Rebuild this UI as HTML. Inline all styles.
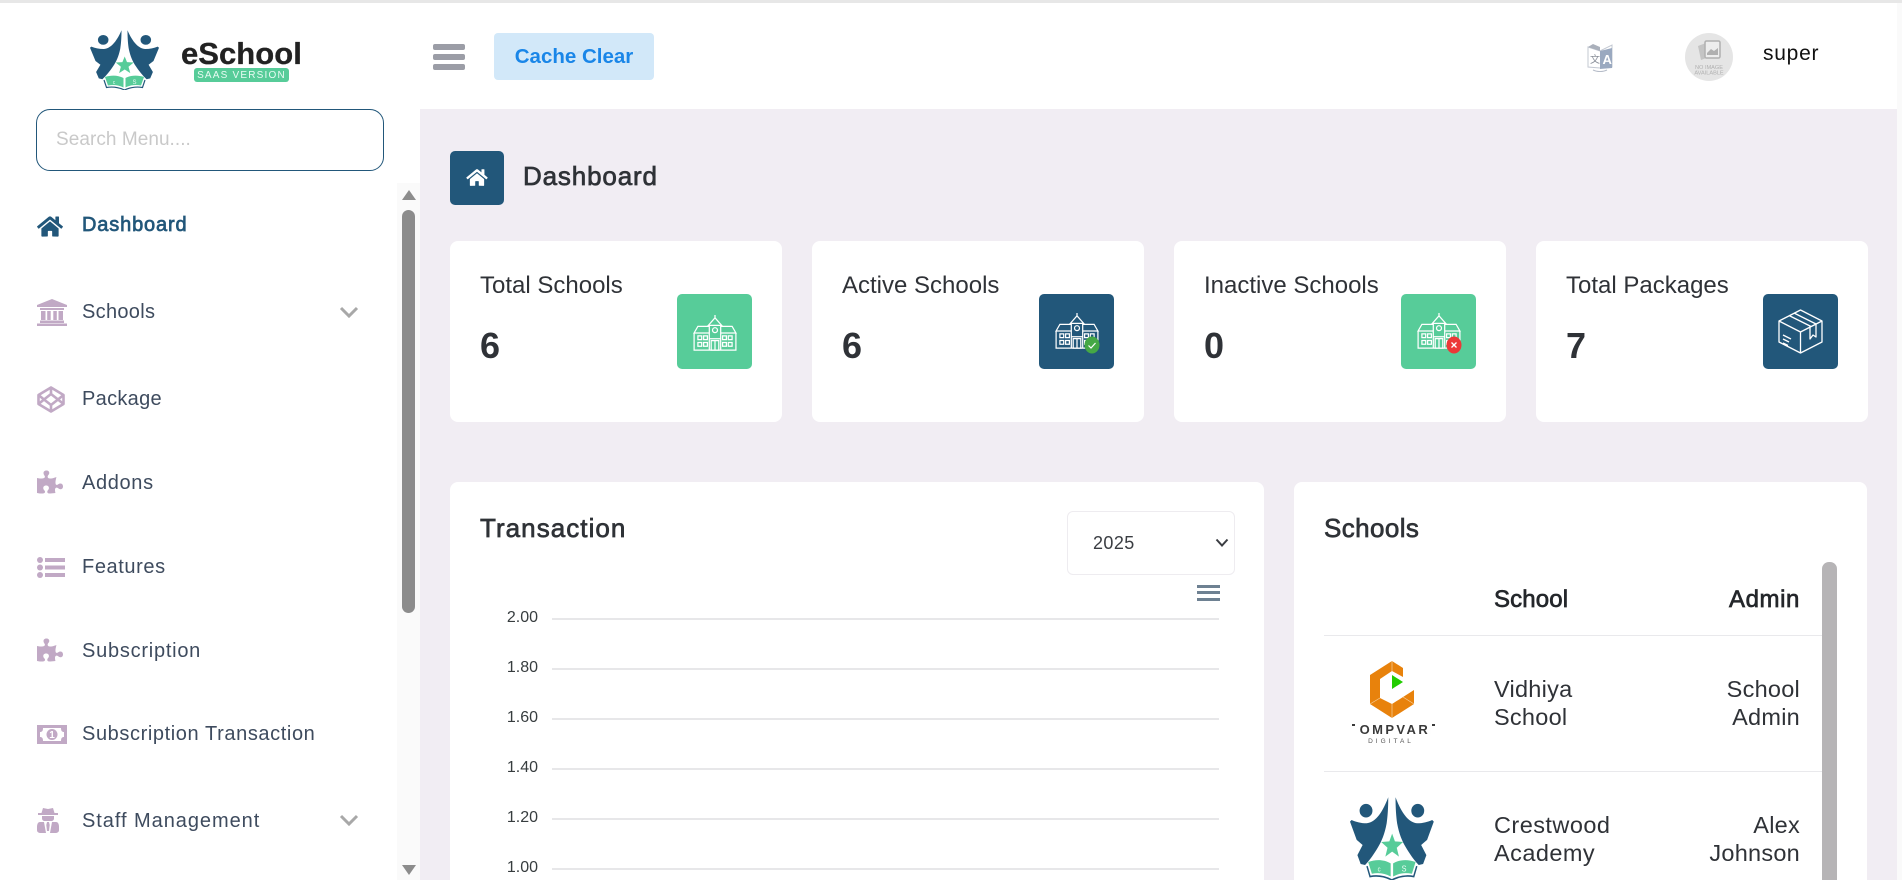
<!DOCTYPE html>
<html lang="en"><head><meta charset="utf-8"><title>eSchool Dashboard</title>
<style>
html,body{margin:0;padding:0;width:1902px;height:880px;overflow:hidden;background:#fff}
body{position:relative;font-family:"Liberation Sans",sans-serif;color:#2f3237}
.a,.t,svg.a{position:absolute}
.t{white-space:nowrap;line-height:30px;height:30px}
.m{-webkit-text-stroke:.7px currentColor}
.nav{left:82px;font-size:20px;color:#3e4b5e}
.card{position:absolute;background:#fff;border-radius:8px}
.ib{position:absolute;top:294px;width:75px;height:75px;border-radius:5px}
.g{background:#57cc99}.n{background:#22577a}
.lab{font-size:24px;top:271px}
.val{font-size:36px;top:331px;height:30px;line-height:30px;font-weight:700}
.gl{position:absolute;left:552px;width:667px;height:2px;background:#e7e7e9}
.yl{position:absolute;left:490px;width:48px;text-align:right;font-size:16px;line-height:18px;color:#373d3f}
.td{font-size:23.5px;line-height:28px;color:#2f3237;position:absolute;letter-spacing:.25px}
</style></head><body>
<div class="a" style="left:0;top:0;width:1902px;height:3px;background:#e7e7e7"></div>
<div class="a" style="left:1897px;top:3px;width:5px;height:877px;background:#fafafa"></div>
<div class="a" style="left:420px;top:109px;width:1477px;height:771px;background:#f1edf3"></div>

<svg width="0" height="0" style="position:absolute"><defs>
<symbol id="logo" viewBox="0 0 70 60" preserveAspectRatio="none">
<g fill="#22577a"><ellipse cx="13.200" cy="9.900" rx="5.300" ry="4.900"/><ellipse cx="55.800" cy="9.900" rx="5.300" ry="4.900"/>
<path d="M31.500 .2C31.500 8 31 14 30.200 19 28.500 27 26 32 23.300 36 20 41 16 46 12.400 49.200L8.800 48.400 6.100 42 10.400 34.700 5.500 31 0 17.800 1.300 16.600C5 18 9 19 13.700 19 20 18.500 26 13 31.500 .2Z"/>
<path transform="translate(69 0) scale(-1 1)" d="M31.500 .2C31.500 8 31 14 30.200 19 28.500 27 26 32 23.300 36 20 41 16 46 12.400 49.200L8.800 48.400 6.100 42 10.400 34.700 5.500 31 0 17.800 1.300 16.600C5 18 9 19 13.700 19 20 18.500 26 13 31.500 .2Z"/></g>
<path fill="#57cc99" d="M34.700 26.500l2.300 5.600 6.700.4-5.200 4.200 1.800 6.400-5.600-3.600-5.600 3.600 1.800-6.400-5.200-4.200 6.700-.4z"/>
<path fill="#57cc99" d="M15 47c6-2 13-2 18.500 1v9.500c-5-2.500-10-3-15.500-2zM35.500 48c5.500-3 12.500-3 18.500-1l-3 8.500c-5.500-1-10.500-.5-15.500 2z"/>
<path fill="none" stroke="#22577a" stroke-width="1.200" d="M14 50l2.500 7.500c6-1 12.500 0 18 2.500 5.500-2.500 12-3.500 18-2.500l2.500-7.500"/>
<text x="24" y="54" font-size="5" fill="#e9fbf3" text-anchor="middle" font-family="Liberation Sans,sans-serif">c</text>
<text x="44.500" y="54" font-size="6" fill="#e9fbf3" text-anchor="middle" font-family="Liberation Sans,sans-serif">S</text>
</symbol>
<symbol id="bld" viewBox="0 0 48 40">
<g fill="none" stroke="#fff" stroke-width="1.300">
<path d="M17 12L24 4l7 8zM18 12v26M30 12v26M24 1v3"/>
<circle cx="24" cy="17" r="2.600"/>
<path d="M18 13H6L2 20h16M30 13h12l4 7H30M2 20v18h44V20"/>
<path d="M18 26h12M20 28h8v10h-8zM24 28v10"/>
<path d="M6 23h4v4H6zM12 23h4v4h-4zM6 30h4v4H6zM12 30h4v4h-4zM32 23h4v4h-4zM38 23h4v4h-4zM32 30h4v4h-4zM38 30h4v4h-4z"/>
</g></symbol>
<clipPath id="cv"><rect x="8" y="55" width="73" height="25"/></clipPath>
</defs></svg>

<!-- Logo -->
<svg class="a" style="left:90px;top:30px" width="70" height="60" viewBox="0 0 70 60"><use href="#logo" width="70" height="60"/></svg>
<div class="t" style="left:181px;top:39px;font-size:31px;font-weight:700;color:#222;letter-spacing:.05px;-webkit-text-stroke:.3px #222">eSchool</div>
<div class="a" style="left:194px;top:68px;width:95px;height:14px;border-radius:3px;background:#57cc99;color:#e9fbf3;font-size:10px;line-height:15px;text-align:center;letter-spacing:1.200px">SAAS VERSION</div>

<!-- Top bar -->
<div class="a" style="left:433px;top:44px;width:32px;height:6px;background:#9b9da6;border-radius:2px"></div>
<div class="a" style="left:433px;top:54px;width:32px;height:6px;background:#9b9da6;border-radius:2px"></div>
<div class="a" style="left:433px;top:64px;width:32px;height:6px;background:#9b9da6;border-radius:2px"></div>
<div class="a" style="left:494px;top:33px;width:160px;height:47px;background:#d2e8f9;border-radius:4px;text-align:center;line-height:48px;font-size:20.5px;font-weight:700;color:#1a86e8">Cache Clear</div>

<svg class="a" style="left:1585px;top:41px" width="30" height="32" viewBox="0 0 30 32">
<path d="M3 6l12 4 12-6v22l-12 1-12-1z" fill="#fff" stroke="#c3c8d2"/>
<path d="M15 10l12-3v20l-12 1z" fill="#9aa9c0"/>
<path d="M3 6l12 4V6L8 3z" fill="#aab0bb"/>
<text x="17.500" y="23" font-size="13" font-weight="700" fill="#fff" font-family="Liberation Sans,sans-serif">A</text>
<text x="5" y="22" font-size="10" fill="#8a8f99" font-family="Liberation Sans,Noto Sans CJK SC,sans-serif">文</text>
<path d="M8 29c4 2 10 2 14 0" fill="none" stroke="#b5bcc8"/></svg>

<div class="a" style="left:1685px;top:33px;width:48px;height:48px;border-radius:50%;background:#e5e5e5"></div>
<svg class="a" style="left:1685px;top:33px" width="48" height="48" viewBox="0 0 48 48">
<path d="M13 13l8-3 3 14-8 3z" fill="#c4c4c4"/>
<rect x="20" y="8" width="15" height="17" rx="1.500" fill="#ededed" stroke="#b0b0b0" stroke-width="1.500"/>
<path d="M22 20l4-4 3 2 4-3v7H22z" fill="#b0b0b0"/>
<text x="24" y="36" font-size="5.600" text-anchor="middle" fill="#b0b0b0" font-family="Liberation Sans,sans-serif">NO IMAGE</text>
<text x="24" y="41.500" font-size="5.600" text-anchor="middle" fill="#b0b0b0" font-family="Liberation Sans,sans-serif">AVAILABLE</text></svg>
<div class="t" style="left:1763px;top:39px;font-size:21px;color:#111;letter-spacing:.75px">super</div>

<!-- Search -->
<div class="a" style="left:36px;top:109px;width:346px;height:60px;border:1px solid #22577a;border-radius:14px;background:#fff"></div>
<div class="t" style="left:56px;top:125px;font-size:19px;color:#c9c9c9;letter-spacing:.05px">Search Menu....</div>

<!-- Sidebar scrollbar -->
<div class="a" style="left:397px;top:183px;width:23px;height:697px;background:#fafafa"></div>
<div class="a" style="left:402px;top:210px;width:13px;height:403px;background:#8c8c8c;border-radius:7px"></div>
<svg class="a" style="left:401px;top:189px" width="16" height="12"><path d="M8 1l7 10H1z" fill="#8c8c8c"/></svg>
<svg class="a" style="left:401px;top:864px" width="16" height="12"><path d="M1 1h14L8 11z" fill="#8c8c8c"/></svg>

<!-- Sidebar nav -->
<svg class="a" style="left:37px;top:215px" width="26" height="23" viewBox="0 0 576 512"><path fill="#22577a" d="M280.370 148.260L96 300.110V464a16 16 0 0 0 16 16l112.060-.29a16 16 0 0 0 15.920-16V368a16 16 0 0 1 16-16h64a16 16 0 0 1 16 16v95.640a16 16 0 0 0 16 16.050L464 480a16 16 0 0 0 16-16V300L295.670 148.260a12.190 12.190 0 0 0-15.300 0zM571.600 251.470L488 182.560V44.050a12 12 0 0 0-12-12h-56a12 12 0 0 0-12 12v72.610L318.470 43a48 48 0 0 0-61 0L4.340 251.470a12 12 0 0 0-1.600 16.900l25.500 31A12 12 0 0 0 45.150 301l235.220-193.740a12.190 12.190 0 0 1 15.300 0L530.900 301a12 12 0 0 0 16.900-1.600l25.500-31a12 12 0 0 0-1.700-16.930z"/></svg>
<div class="t nav m" style="top:210px;color:#22577a;letter-spacing:.85px">Dashboard</div>

<svg class="a" style="left:37px;top:299px" width="30" height="27" viewBox="0 0 30 27"><path fill="#c1a9c5" d="M15 0l15 6v2H0V6zM3 9h24v2H3zM4 12h4.500v9H4zM10.200 12h3.500v9h-3.500zM16.300 12h3.500v9h-3.500zM21.500 12h4.500v9h-4.500zM3 21.500h24v2.500H3zM0 24.500h30V27H0z"/></svg>
<div class="t nav" style="top:297px;letter-spacing:.3px">Schools</div>
<svg class="a" style="left:339px;top:306px" width="20" height="12"><path d="M2 2l8 8 8-8" fill="none" stroke="#a8a8a8" stroke-width="3"/></svg>

<svg class="a" style="left:37px;top:386px" width="28" height="27" viewBox="0 0 28 27"><g fill="none" stroke="#c1a9c5" stroke-width="2.600" stroke-linejoin="round"><path d="M14 1.500L26.500 9v9L14 25.500 1.500 18V9z"/><path d="M14 8l7 5.500-7 5.500-7-5.500zM14 1.500V8M14 19v6.500M1.500 9L7 13.500 1.500 18M26.500 9L21 13.500l5.500 4.500"/></g></svg>
<div class="t nav" style="top:384px;letter-spacing:.3px">Package</div>

<svg class="a" style="left:37px;top:470px" width="26" height="24" viewBox="0 0 576 512"><path id="pz" fill="#c1a9c5" d="M519.442 288.651c-41.519 0-59.5 31.593-82.058 31.593C377.409 320.244 432 144 432 144s-196.288 80-196.288-3.297c0-35.827 36.288-46.25 36.288-85.985C272 19.216 243.885 0 210.539 0c-34.654 0-66.366 18.891-66.366 56.346 0 41.364 31.711 59.277 31.711 81.75C175.885 207.719 0 166.758 0 166.758v333.237s178.635 41.047 178.635-28.662c0-22.473-40-40.107-40-81.471 0-37.456 29.25-56.346 63.577-56.346 33.673 0 61.788 19.216 61.788 54.717 0 39.735-36.288 50.158-36.288 85.985 0 60.803 129.675 25.73 181.23 25.73 0 0-34.725-120.101 25.827-120.101 35.962 0 46.423 36.152 86.308 36.152C556.712 416 576 387.99 576 354.443c0-34.199-18.962-65.792-56.558-65.792z"/></svg>
<div class="t nav" style="top:468px;letter-spacing:.65px">Addons</div>

<svg class="a" style="left:37px;top:557px" width="28" height="21" viewBox="0 0 28 21"><g fill="#c1a9c5"><circle cx="3" cy="3" r="3"/><circle cx="3" cy="10.500" r="3"/><circle cx="3" cy="18" r="3"/><rect x="8" y="1" width="20" height="4"/><rect x="8" y="8.500" width="20" height="4"/><rect x="8" y="16" width="20" height="4"/></g></svg>
<div class="t nav" style="top:552px;letter-spacing:.6px">Features</div>

<svg class="a" style="left:37px;top:638px" width="26" height="24" viewBox="0 0 576 512"><use href="#pz"/></svg>
<div class="t nav" style="top:636px;letter-spacing:.75px">Subscription</div>

<svg class="a" style="left:37px;top:725px" width="30" height="19" viewBox="0 0 30 19"><path fill="#c1a9c5" fill-rule="evenodd" d="M0 0h30v19H0zM6 3C6 6 5 7 3 7v5c2 0 3 1 3 4h18c0-3 1-4 3-4V7c-2 0-3-1-3-4z"/><circle cx="15" cy="9.500" r="5.500" fill="#c1a9c5"/><text x="15" y="13" font-size="10" font-weight="700" text-anchor="middle" fill="#fff" font-family="Liberation Sans,sans-serif">1</text></svg>
<div class="t nav" style="top:719px;letter-spacing:.6px">Subscription Transaction</div>

<svg class="a" style="left:37px;top:808px" width="22" height="25" viewBox="0 0 22 25"><path fill="#c1a9c5" d="M6 0l5 1 5-1 1.500 5H21v2H1V5h3.500zM5 8h12v2c0 2-1 3-3 3h-6c-2 0-3-1-3-3zM3 14h4l2 11H4c-2.500 0-4-1-4-3v-3c0-3 1-5 3-5zM15 14h4c2 0 3 2 3 5v3c0 2-1.500 3-4 3h-5z"/><path fill="#c1a9c5" d="M10 14h2l.7 3-.7 6h-2l-.7-6z"/></svg>
<div class="t nav" style="top:806px;letter-spacing:.95px">Staff Management</div>
<svg class="a" style="left:339px;top:814px" width="20" height="12"><path d="M2 2l8 8 8-8" fill="none" stroke="#a8a8a8" stroke-width="3"/></svg>

<!-- Page title -->
<div class="a n" style="left:450px;top:151px;width:54px;height:54px;border-radius:5px"></div>
<svg class="a" style="left:466px;top:168px" width="22" height="19" viewBox="0 0 576 512"><path fill="#fff" d="M280.370 148.260L96 300.110V464a16 16 0 0 0 16 16l112.060-.29a16 16 0 0 0 15.920-16V368a16 16 0 0 1 16-16h64a16 16 0 0 1 16 16v95.640a16 16 0 0 0 16 16.050L464 480a16 16 0 0 0 16-16V300L295.670 148.260a12.190 12.190 0 0 0-15.300 0zM571.600 251.470L488 182.560V44.050a12 12 0 0 0-12-12h-56a12 12 0 0 0-12 12v72.610L318.470 43a48 48 0 0 0-61 0L4.340 251.470a12 12 0 0 0-1.600 16.900l25.500 31A12 12 0 0 0 45.150 301l235.220-193.740a12.190 12.190 0 0 1 15.300 0L530.900 301a12 12 0 0 0 16.900-1.600l25.500-31a12 12 0 0 0-1.700-16.930z"/></svg>
<div class="t m" style="left:523px;top:161px;font-size:26px;color:#2f3237;letter-spacing:.85px">Dashboard</div>

<!-- Stat cards -->
<div class="card" style="left:450px;top:241px;width:332px;height:181px"></div>
<div class="card" style="left:812px;top:241px;width:332px;height:181px"></div>
<div class="card" style="left:1174px;top:241px;width:332px;height:181px"></div>
<div class="card" style="left:1536px;top:241px;width:332px;height:181px"></div>

<div class="t lab" style="left:480px">Total Schools</div>
<div class="t val" style="left:480px">6</div>
<div class="ib g" style="left:677px"></div>
<svg class="a" style="left:692px;top:314px" width="46" height="38"><use href="#bld"/></svg>

<div class="t lab" style="left:842px">Active Schools</div>
<div class="t val" style="left:842px">6</div>
<div class="ib n" style="left:1039px"></div>
<svg class="a" style="left:1054px;top:312px" width="46" height="38"><use href="#bld"/></svg>
<svg class="a" style="left:1084px;top:336px" width="16" height="18" viewBox="0 0 16 18"><ellipse cx="8" cy="9" rx="7.500" ry="8.500" fill="#45a845"/><path d="M4.500 9.500l2.500 2.500 4.500-5" fill="none" stroke="#fff" stroke-width="1.200"/></svg>

<div class="t lab" style="left:1204px">Inactive Schools</div>
<div class="t val" style="left:1204px">0</div>
<div class="ib g" style="left:1401px"></div>
<svg class="a" style="left:1416px;top:312px" width="46" height="38"><use href="#bld"/></svg>
<svg class="a" style="left:1446px;top:336px" width="16" height="18" viewBox="0 0 16 18"><ellipse cx="8" cy="9" rx="7.500" ry="8.500" fill="#ec3838"/><path d="M5.500 6.500l5 5M10.500 6.500l-5 5" stroke="#fff" stroke-width="1.300"/></svg>

<div class="t lab" style="left:1566px">Total Packages</div>
<div class="t val" style="left:1566px">7</div>
<div class="ib n" style="left:1763px"></div>
<svg class="a" style="left:1778px;top:309px" width="45" height="45" viewBox="0 0 45 45"><g fill="none" stroke="#fff" stroke-width="1.300" stroke-linejoin="round"><path d="M22.500 1L44 12v21L22.500 44 1 33V12zM1 12l21.500 11L44 12M22.500 23v21"/><path d="M11 6.500L33 17.500M16 4l22 11v13l-3-2-3 4v-13"/><path d="M5 30l6 3M5 26l8 4M5 34l5 2.500"/></g></svg>

<!-- Transaction card -->
<div class="card" style="left:450px;top:482px;width:814px;height:398px;border-radius:8px 8px 0 0"></div>
<div class="t m" style="left:480px;top:513px;font-size:26px;color:#2f3237;letter-spacing:1.050px">Transaction</div>
<div class="a" style="left:1067px;top:511px;width:166px;height:62px;border:1px solid #eeecf0;border-radius:6px"></div>
<div class="t" style="left:1093px;top:528px;font-size:18px;color:#3a3d42;letter-spacing:.4px">2025</div>
<svg class="a" style="left:1215px;top:538px" width="14" height="10"><path d="M1.500 1.500L7 7.500l5.500-6" fill="none" stroke="#3a3d42" stroke-width="2"/></svg>
<div class="a" style="left:1197px;top:585px;width:23px;height:3px;background:#6e8192"></div>
<div class="a" style="left:1197px;top:591px;width:23px;height:3px;background:#6e8192"></div>
<div class="a" style="left:1197px;top:598px;width:23px;height:3px;background:#6e8192"></div>

<div class="gl" style="top:618px"></div><div class="yl" style="top:609px">2.00</div>
<div class="gl" style="top:668px"></div><div class="yl" style="top:659px">1.80</div>
<div class="gl" style="top:718px"></div><div class="yl" style="top:709px">1.60</div>
<div class="gl" style="top:768px"></div><div class="yl" style="top:759px">1.40</div>
<div class="gl" style="top:818px"></div><div class="yl" style="top:809px">1.20</div>
<div class="gl" style="top:868px"></div><div class="yl" style="top:859px">1.00</div>

<!-- Schools card -->
<div class="card" style="left:1294px;top:482px;width:573px;height:398px;border-radius:8px 8px 0 0"></div>
<div class="t m" style="left:1324px;top:513px;font-size:26px;color:#2f3237;letter-spacing:.4px">Schools</div>
<div class="a" style="left:1822px;top:562px;width:15px;height:318px;background:#b6b4b6;border-radius:7px 7px 0 0"></div>
<div class="t m" style="left:1494px;top:585px;font-size:24px;color:#24272b;letter-spacing:.15px">School</div>
<div class="t m" style="right:102px;top:585px;font-size:24px;color:#24272b;letter-spacing:.6px">Admin</div>
<div class="a" style="left:1324px;top:635px;width:498px;height:1px;background:#e9e9ec"></div>
<div class="a" style="left:1324px;top:771px;width:498px;height:1px;background:#e9e9ec"></div>

<svg class="a" style="left:1350px;top:661px" width="86" height="84" viewBox="0 0 86 84">
<g transform="translate(20 0)">
<path fill="#e8820c" d="M22 0L33 7V16L22 10 10 18V37L22 43 44 29V43L22 57 0 43V14Z"/>
<path fill="#22cc00" d="M22 14L33 21 22 28Z"/>
<path fill="none" stroke="#f6cf9e" stroke-width=".7" d="M22 0V10M0 43L10 37M22 57V43M44 43L33 36"/>
</g>
<rect x="2" y="63" width="3" height="2" fill="#3a3a3a"/><rect x="82" y="63" width="3" height="2" fill="#3a3a3a"/>
<text x="44.500" y="73" font-size="13" font-weight="700" text-anchor="middle" letter-spacing="2.400" fill="#3a3a3a" clip-path="url(#cv)" font-family="Liberation Sans,sans-serif">COMPVARE</text>
<text x="41" y="82" font-size="6.500" text-anchor="middle" letter-spacing="3" fill="#555" font-family="Liberation Sans,sans-serif">DIGITAL</text></svg>
<div class="td" style="left:1494px;top:675px">Vidhiya<br>School</div>
<div class="td" style="right:102px;top:675px;text-align:right">School<br>Admin</div>

<svg class="a" style="left:1350px;top:797px" width="85" height="83" viewBox="0 0 70 60" preserveAspectRatio="none"><use href="#logo" width="70" height="60"/></svg>
<div class="td" style="left:1494px;top:811px;letter-spacing:.45px">Crestwood<br>Academy</div>
<div class="td" style="right:102px;top:811px;text-align:right">Alex<br>Johnson</div>
</body></html>
